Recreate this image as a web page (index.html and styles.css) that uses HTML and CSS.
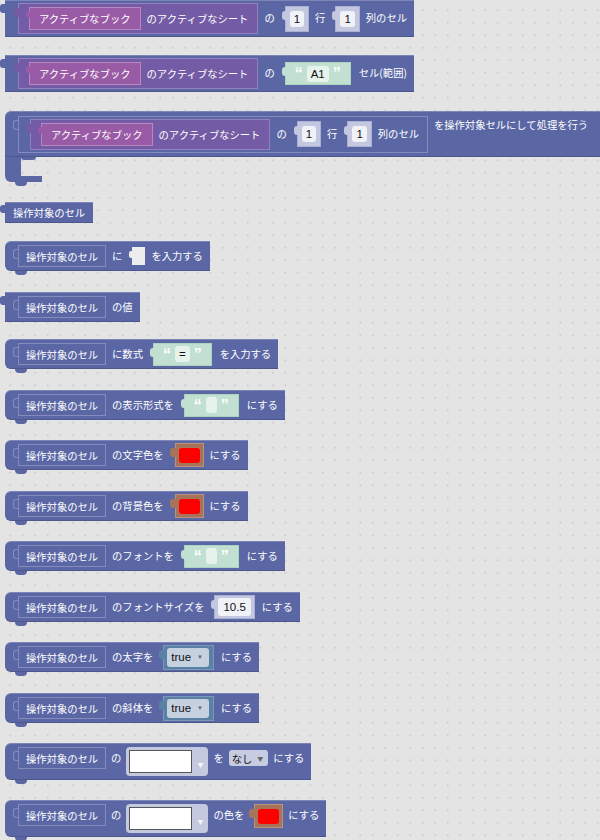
FILE: index.html
```html
<!DOCTYPE html>
<html lang="ja">
<head>
<meta charset="utf-8">
<title>Blocks</title>
<link rel="stylesheet" href="styles.css">
</head>
<body>
<div class="ws">
  <div class="row">
    <div class="blk out b1">
      <div class="purple tab"><div class="pink tab">アクティブなブック</div><span>のアクティブなシート</span></div>
      <span class="t">の</span>
      <div class="num tab"><span class="fld">1</span></div>
      <span class="t">行</span>
      <div class="num tab"><span class="fld">1</span></div>
      <span class="t">列のセル</span>
    </div>
  </div>
  <div class="row">
    <div class="blk out b1">
      <div class="purple tab"><div class="pink tab">アクティブなブック</div><span>のアクティブなシート</span></div>
      <span class="t">の</span>
      <div class="str tab"><span class="q">“</span><span class="sfld">A1</span><span class="q">”</span></div>
      <span class="t">セル(範囲)</span>
    </div>
  </div>
  <div class="row">
    <div class="cblock">
      <div class="blk ctop">
        <div class="cell big">
          <div class="purple tab"><div class="pink tab">アクティブなブック</div><span>のアクティブなシート</span></div>
          <span class="t">の</span>
          <div class="num tab"><span class="fld">1</span></div>
          <span class="t">行</span>
          <div class="num tab"><span class="fld">1</span></div>
          <span class="t">列のセル</span>
        </div>
        <span class="t toplbl">を操作対象セルにして処理を行う</span>
      </div>
      <div class="carm"></div>
      <div class="cbot"></div>
    </div>
  </div>
  <div class="row">
    <div class="blk out rep">操作対象のセル</div>
  </div>
  <div class="row">
    <div class="blk stmt">
      <div class="cell">操作対象のセル</div>
      <span class="t">に</span>
      <div class="empty"></div>
      <span class="t">を入力する</span>
    </div>
  </div>
  <div class="row">
    <div class="blk out">
      <div class="cell">操作対象のセル</div>
      <span class="t">の値</span>
    </div>
  </div>
  <div class="row">
    <div class="blk stmt">
      <div class="cell">操作対象のセル</div>
      <span class="t">に数式</span>
      <div class="str tab"><span class="q">“</span><span class="sfld">=</span><span class="q">”</span></div>
      <span class="t">を入力する</span>
    </div>
  </div>
  <div class="row">
    <div class="blk stmt">
      <div class="cell">操作対象のセル</div>
      <span class="t">の表示形式を</span>
      <div class="str tab"><span class="q">“</span><span class="sfld"></span><span class="q">”</span></div>
      <span class="t">にする</span>
    </div>
  </div>
  <div class="row">
    <div class="blk stmt">
      <div class="cell">操作対象のセル</div>
      <span class="t">の文字色を</span>
      <div class="col tab"><span class="sw"></span></div>
      <span class="t">にする</span>
    </div>
  </div>
  <div class="row">
    <div class="blk stmt">
      <div class="cell">操作対象のセル</div>
      <span class="t">の背景色を</span>
      <div class="col tab"><span class="sw"></span></div>
      <span class="t">にする</span>
    </div>
  </div>
  <div class="row">
    <div class="blk stmt">
      <div class="cell">操作対象のセル</div>
      <span class="t">のフォントを</span>
      <div class="str tab"><span class="q">“</span><span class="sfld"></span><span class="q">”</span></div>
      <span class="t">にする</span>
    </div>
  </div>
  <div class="row">
    <div class="blk stmt">
      <div class="cell">操作対象のセル</div>
      <span class="t">のフォントサイズを</span>
      <div class="num tab n2"><span class="fld">10.5</span></div>
      <span class="t">にする</span>
    </div>
  </div>
  <div class="row">
    <div class="blk stmt">
      <div class="cell">操作対象のセル</div>
      <span class="t">の太字を</span>
      <div class="bool tab"><span class="dd">true<span class="arr">▼</span></span></div>
      <span class="t">にする</span>
    </div>
  </div>
  <div class="row">
    <div class="blk stmt">
      <div class="cell">操作対象のセル</div>
      <span class="t">の斜体を</span>
      <div class="bool tab"><span class="dd">true<span class="arr">▼</span></span></div>
      <span class="t">にする</span>
    </div>
  </div>
  <div class="row">
    <div class="blk stmt tall">
      <div class="cell">操作対象のセル</div>
      <span class="t">の</span>
      <div class="ddbig"><span class="wbox"></span><span class="arr w">▼</span></div>
      <span class="t">を</span>
      <span class="dd light">なし<span class="arr">▼</span></span>
      <span class="t">にする</span>
    </div>
  </div>
  <div class="row">
    <div class="blk stmt tall">
      <div class="cell">操作対象のセル</div>
      <span class="t">の</span>
      <div class="ddbig"><span class="wbox"></span><span class="arr w">▼</span></div>
      <span class="t">の色を</span>
      <div class="col tab"><span class="sw"></span></div>
      <span class="t">にする</span>
    </div>
  </div>
</div>
</body>
</html>
```
FILE: styles.css
```css
html, body { margin: 0; padding: 0; }
body {
  width: 600px;
  height: 840px;
  overflow: hidden;
  background-color: #e4e4e4;
  background-image: radial-gradient(circle, #c6c6c6 0.7px, transparent 1.2px);
  background-size: 12.5px 12.5px;
  background-position: 4px 4px;
  font-family: "Noto Sans CJK JP", "Liberation Sans", sans-serif;
  font-size: 10.3px;
  color: #fff;
}
.ws {
  display: grid;
  grid-template-rows: 55px 56px 91px 39px 51px 47px 51px 50px 51px 50px 51px 50px 51px 50px 57px 40px;
  padding-left: 5px;
}
.row { display: flex; align-items: flex-start; }
.t { line-height: 1; }

.blk {
  display: inline-flex;
  align-items: center;
  gap: 6px;
  background: #5b67a5;
  position: relative;
  box-sizing: border-box;
  padding: 0 7px 0 13px;
  height: 30px;
  white-space: nowrap;
  box-shadow: inset 0 1px 0 rgba(255,255,255,0.2), inset 0 -1px 0 rgba(0,0,0,0.15);
}
.out::before, .tab::before {
  content: "";
  position: absolute;
  left: -5px;
  top: 4px;
  width: 5px;
  height: 9px;
  background: inherit;
  border-radius: 3px 0 0 3px;
}
.b1 { height: 37px; padding: 0 7px 0 13px; gap: 6px; }
.rep { height: 21px; padding: 0 8px; }
.rep::before { top: 3px; height: 8px; }

.stmt { border-radius: 6px 0 0 6px; }
.stmt::after {
  content: "";
  position: absolute;
  left: 10px;
  bottom: -4px;
  width: 12px;
  height: 4px;
  background: inherit;
  border-radius: 0 0 5px 5px;
}
.tall { height: 37px; align-items: flex-start; padding-top: 4px; gap: 5px; }
.tall .t { line-height: 22px; }

.cell {
  display: inline-flex;
  align-items: center;
  gap: 7px;
  height: 22px;
  padding: 0 7px;
  box-sizing: border-box;
  border: 1px solid #838cbd;
  background: #5b67a5;
  position: relative;
}
.cell::before {
  content: "";
  position: absolute;
  left: -6px;
  top: 3px;
  width: 5px;
  height: 8px;
  border: 1px solid #838cbd;
  border-right: 0;
  border-radius: 3px 0 0 3px;
}
.cell.big { height: 37px; padding: 0 8px 0 11px; gap: 6px; }

.purple {
  display: inline-flex;
  align-items: center;
  gap: 6px;
  background: #745ba5;
  height: 31px;
  padding: 0 9px 0 10px;
  box-sizing: border-box;
  border: 1px solid #9280bf;
  position: relative;
}
.pink {
  display: inline-flex;
  align-items: center;
  background: #995ba5;
  height: 23px;
  padding: 0 9px;
  box-sizing: border-box;
  border: 1px solid #b987c2;
  position: relative;
}
.pink::before { left: -4px; width: 4px; top: 3px; height: 7px; }

.num {
  display: inline-flex;
  align-items: center;
  background: #c3c7e0;
  height: 26px;
  padding: 0 4px;
  box-sizing: border-box;
  border: 1px solid #aab0d3;
  position: relative;
  margin-left: 4px;
}
.num::before { left: -4px; width: 4px; }
.n2 { height: 24px; padding: 0 3px; margin-right: 1px; }
.fld {
  display: inline-flex;
  align-items: center;
  justify-content: center;
  background: #f1f2f8;
  border-radius: 3px;
  height: 16px;
  min-width: 13px;
  padding: 0 4px;
  box-sizing: border-box;
  color: #111;
  font: 11.5px "Liberation Sans", sans-serif;
}
.n2 .fld { height: 18px; padding: 0 5px; }

.str {
  display: inline-flex;
  align-items: center;
  gap: 4px;
  background: #c2e0d2;
  height: 23px;
  padding: 0 9px 0 9px;
  box-sizing: border-box;
  border: 1px solid #abd3c0;
  position: relative;
  margin-left: 4px;
  margin-right: 2px;
}
.str::before { left: -4px; width: 4px; }
.q {
  font: bold 16px "Liberation Sans", sans-serif;
  color: #fff;
  line-height: 1;
  align-self: flex-start;
  margin-top: 3px;
}
.sfld {
  display: inline-flex;
  align-items: center;
  justify-content: center;
  background: #e6f2ec;
  border-radius: 3px;
  height: 16px;
  min-width: 11px;
  padding: 0 4px;
  box-sizing: border-box;
  color: #111;
  font: 11.5px "Liberation Sans", sans-serif;
}
.sfld:empty { padding: 0; }

.col {
  display: inline-flex;
  align-items: center;
  background: #a5745b;
  height: 24px;
  padding: 0 3px;
  box-sizing: border-box;
  border: 1px solid #ba917d;
  position: relative;
  margin-left: 5px;
}
.col::before { left: -6px; width: 6px; top: 4px; height: 9px; }
.sw { width: 21px; height: 15px; background: #ff0000; border-radius: 3px; }

.bool {
  display: inline-flex;
  align-items: center;
  background: #5b80a5;
  height: 25px;
  padding: 0 4px 0 3px;
  box-sizing: border-box;
  border: 1px solid #7b98b8;
  position: relative;
  margin-left: 4px;
  margin-right: 1px;
}
.bool::before { left: -5px; }
.dd {
  display: inline-flex;
  align-items: center;
  gap: 6px;
  background: #c6d1e0;
  border-radius: 3px;
  height: 19px;
  padding: 0 6px 0 4px;
  box-sizing: border-box;
  color: #111;
  font: 11.5px "Liberation Sans", "Noto Sans CJK JP", sans-serif;
}
.arr { font-size: 6px; color: #666; }
.dd.light {
  background: #c8cce2;
  height: 16px;
  margin-top: 3px;
  gap: 5px;
  padding: 0 5px 0 3px;
  font-size: 10.3px;
  font-family: "Noto Sans CJK JP", "Liberation Sans", sans-serif;
}

.ddbig {
  display: inline-flex;
  align-items: center;
  gap: 5px;
  background: #c5c9df;
  border-radius: 4px;
  height: 29px;
  padding: 0 5px 0 3px;
  box-sizing: border-box;
}
.wbox {
  width: 63px;
  height: 23px;
  background: #fff;
  border: 1px solid #555;
  box-sizing: border-box;
}
.arr.w { color: #f4f4fa; margin-top: 6px; }

.cblock { display: flex; flex-direction: column; align-items: flex-start; }
.ctop {
  height: 46px;
  border-radius: 6px 0 0 0;
  padding-right: 30px;
}
.toplbl { align-self: flex-start; margin-top: 9px; }
.carm {
  width: 16px;
  height: 19px;
  background: #5b67a5;
  position: relative;
}
.carm::after {
  content: "";
  position: absolute;
  left: 16px;
  top: 0;
  width: 15px;
  height: 3px;
  background: #5b67a5;
  border-radius: 0 0 5px 5px;
}
.cbot {
  width: 37px;
  height: 6px;
  background: #5b67a5;
  border-radius: 0 0 0 6px;
  position: relative;
}
.cbot::after {
  content: "";
  position: absolute;
  left: 10px;
  bottom: -4px;
  width: 12px;
  height: 4px;
  background: #5b67a5;
  border-radius: 0 0 5px 5px;
}

.empty {
  width: 13px;
  height: 18px;
  background: #ededed;
  position: relative;
  margin-left: 4px;
}
.empty::before {
  content: "";
  position: absolute;
  left: -3px;
  top: 4px;
  width: 3px;
  height: 7px;
  background: #ededed;
  border-radius: 2px 0 0 2px;
}
```
